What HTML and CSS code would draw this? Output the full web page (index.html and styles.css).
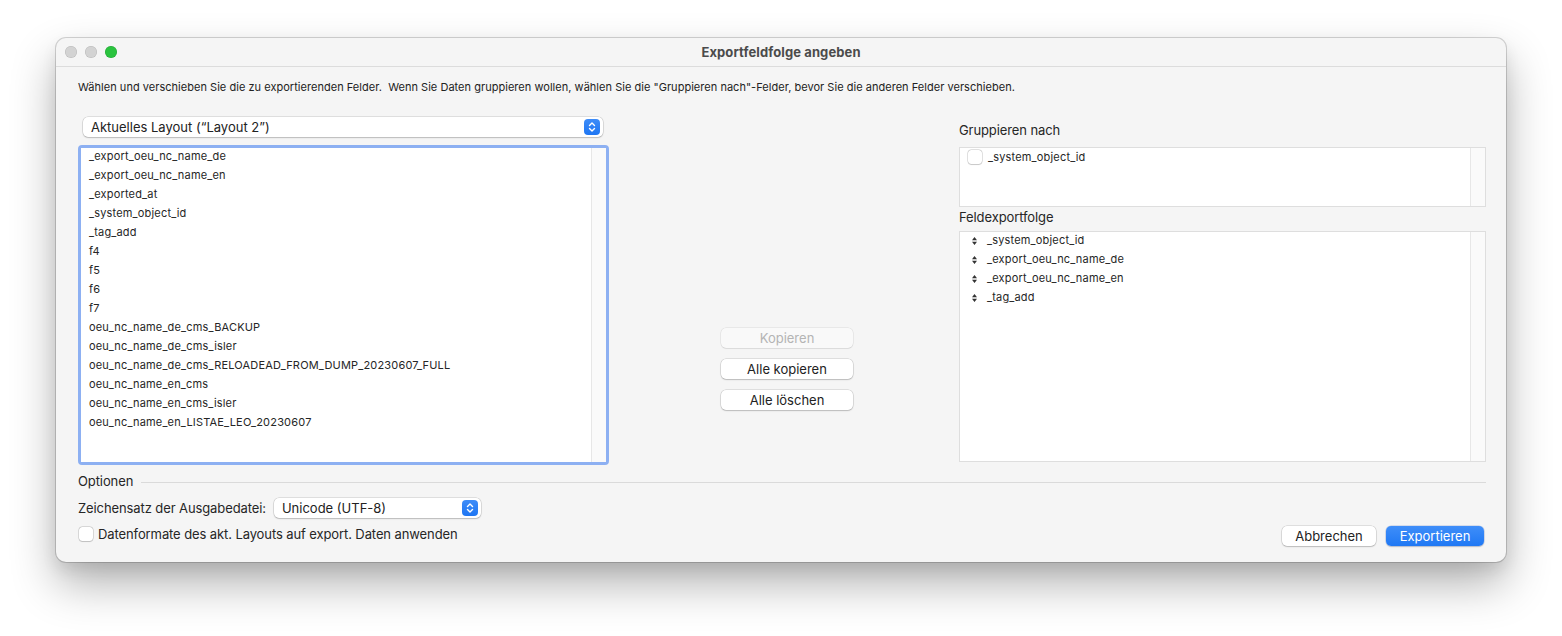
FILE: index.html
```html
<!DOCTYPE html>
<html lang="de">
<head>
<meta charset="utf-8">
<title>Exportfeldfolge angeben</title>
<link rel="stylesheet" href="styles.css">
</head>
<body>
<div class="window">
  <div class="titlebar">
    <div class="lights">
      <span class="light"></span>
      <span class="light"></span>
      <span class="light green"></span>
    </div>
    <div class="title">Exportfeldfolge angeben</div>
    <div></div>
  </div>
  <div class="content">
    <p class="intro">Wählen und verschieben Sie die zu exportierenden Felder.  Wenn Sie Daten gruppieren wollen, wählen Sie die "Gruppieren nach"-Felder, bevor Sie die anderen Felder verschieben.</p>
    <div class="main">
      <div class="leftcol">
        <div class="popup wide">
          <span class="popup-text">Aktuelles Layout (“Layout 2”)</span>
          <span class="stepper"><svg width="16" height="16" viewBox="0 0 16 16"><path d="M5.5 6.5 L8 4 L10.5 6.5 M5.5 9.5 L8 12 L10.5 9.5" fill="none" stroke="#fff" stroke-width="1.4" stroke-linecap="round" stroke-linejoin="round"/></svg></span>
        </div>
        <div class="listring">
          <div class="listbox">
            <ul class="rows">
              <li>_export_oeu_nc_name_de</li>
              <li>_export_oeu_nc_name_en</li>
              <li>_exported_at</li>
              <li>_system_object_id</li>
              <li>_tag_add</li>
              <li>f4</li>
              <li>f5</li>
              <li>f6</li>
              <li>f7</li>
              <li>oeu_nc_name_de_cms_BACKUP</li>
              <li>oeu_nc_name_de_cms_isler</li>
              <li>oeu_nc_name_de_cms_RELOADEAD_FROM_DUMP_20230607_FULL</li>
              <li>oeu_nc_name_en_cms</li>
              <li>oeu_nc_name_en_cms_isler</li>
              <li>oeu_nc_name_en_LISTAE_LEO_20230607</li>
            </ul>
            <div class="track"></div>
          </div>
        </div>
      </div>
      <div class="midcol">
        <button class="btn disabled">Kopieren</button>
        <button class="btn">Alle kopieren</button>
        <button class="btn">Alle löschen</button>
      </div>
      <div class="rightcol">
        <div class="label">Gruppieren nach</div>
        <div class="box groupbox">
          <ul class="rows right">
            <li><span class="check"></span>_system_object_id</li>
          </ul>
          <div class="track"></div>
        </div>
        <div class="label second">Feldexportfolge</div>
        <div class="box orderbox">
          <ul class="rows right">
            <li><svg class="updown" width="5" height="8" viewBox="0 0 5 8"><path d="M0 3.3 L2.5 0 L5 3.3 Z M0 4.7 L2.5 8 L5 4.7 Z" fill="#333"/></svg>_system_object_id</li>
            <li><svg class="updown" width="5" height="8" viewBox="0 0 5 8"><path d="M0 3.3 L2.5 0 L5 3.3 Z M0 4.7 L2.5 8 L5 4.7 Z" fill="#333"/></svg>_export_oeu_nc_name_de</li>
            <li><svg class="updown" width="5" height="8" viewBox="0 0 5 8"><path d="M0 3.3 L2.5 0 L5 3.3 Z M0 4.7 L2.5 8 L5 4.7 Z" fill="#333"/></svg>_export_oeu_nc_name_en</li>
            <li><svg class="updown" width="5" height="8" viewBox="0 0 5 8"><path d="M0 3.3 L2.5 0 L5 3.3 Z M0 4.7 L2.5 8 L5 4.7 Z" fill="#333"/></svg>_tag_add</li>
          </ul>
          <div class="track"></div>
        </div>
      </div>
    </div>
    <div class="optheader">
      <span class="optlabel">Optionen</span>
      <span class="optline"></span>
    </div>
    <div class="bottom">
      <div class="options">
        <div class="optrow">
          <span class="optlabel">Zeichensatz der Ausgabedatei:</span>
          <div class="popup charset">
            <span class="popup-text">Unicode (UTF-8)</span>
            <span class="stepper"><svg width="16" height="16" viewBox="0 0 16 16"><path d="M5.5 6.5 L8 4 L10.5 6.5 M5.5 9.5 L8 12 L10.5 9.5" fill="none" stroke="#fff" stroke-width="1.4" stroke-linecap="round" stroke-linejoin="round"/></svg></span>
          </div>
        </div>
        <label class="checkrow"><span class="check big"></span>Datenformate des akt. Layouts auf export. Daten anwenden</label>
      </div>
      <div class="actions">
        <button class="btn action">Abbrechen</button>
        <button class="btn action primary">Exportieren</button>
      </div>
    </div>
  </div>
</div>
</body>
</html>
```
FILE: styles.css
```css
* { box-sizing: border-box; }
html, body { margin: 0; background: #ffffff; }
body {
  font-family: Inter, "Noto Sans", "Liberation Sans", sans-serif;
  color: #262626;
  padding: 38px 0 0 56px;
  height: 636px;
  overflow: hidden;
}
.window {
  width: 1450px;
  height: 524px;
  background: #f5f5f5;
  border-radius: 10px;
  box-shadow: 0 0 0 1px rgba(0,0,0,0.16), 0 22px 45px rgba(0,0,0,0.30), 0 8px 16px rgba(0,0,0,0.08);
  display: flex;
  flex-direction: column;
  overflow: hidden;
}
.titlebar {
  height: 29px;
  flex: none;
  border-bottom: 1px solid #dcdcdc;
  display: grid;
  grid-template-columns: 1fr auto 1fr;
  align-items: center;
  padding: 0 9px;
}
.lights { display: flex; gap: 8px; }
.light {
  width: 12px; height: 12px; border-radius: 50%;
  background: #d3d3d3;
  box-shadow: inset 0 0 0 0.5px rgba(0,0,0,0.14);
}
.light.green { background: #2ac33f; box-shadow: inset 0 0 0 0.5px rgba(0,110,20,0.35); }
.title { font-size: 13px; font-weight: 700; color: #4b4b4b; letter-spacing: 0.1px; }

.content { flex: 1; padding: 13px 20px 15px 22px; display: flex; flex-direction: column; }
.intro { margin: 0; font-size: 11px; line-height: 14px; white-space: pre; color: #222; letter-spacing: 0.03px; }

.main { display: grid; grid-template-columns: 531px 350px 527px; margin-top: 23px; height: 348px; }

.popup {
  height: 20px;
  background: #fff;
  border-radius: 5px;
  box-shadow: 0 0 0 0.5px rgba(0,0,0,0.18), 0 1px 1.5px rgba(0,0,0,0.16);
  display: flex;
  align-items: center;
  justify-content: space-between;
  padding: 0 3px 0 8px;
  font-size: 13px;
  color: #222;
}
.popup.wide { margin: 0 6px 0 5px; }
.stepper {
  width: 16px; height: 16px; border-radius: 4px;
  background: linear-gradient(#3d8cf8, #1e76f3);
  display: flex;
}
.listring {
  margin-top: 8px;
  height: 320px;
  border: 3px solid #8db0f2;
  border-radius: 4px;
  background: #fff;
}
.listbox { height: 100%; display: flex; background: #fff; }
.rows { list-style: none; margin: 0; padding: 0; flex: 1; font-size: 11px; color: #262626; letter-spacing: 0.18px; }
.rows li { height: 19px; line-height: 19px; padding-left: 8px; white-space: nowrap; }
.leftcol .rows { margin-top: -1px; }
.track { width: 15px; flex: none; background: #fafafa; border-left: 1px solid #e7e7e7; }

.midcol { padding: 211px 0 0 112px; display: flex; flex-direction: column; gap: 11px; }
.btn {
  font-family: inherit;
  width: 132px; height: 20px;
  border: none;
  background: #fff;
  border-radius: 5px;
  box-shadow: 0 0 0 0.5px rgba(0,0,0,0.18), 0 1px 1.5px rgba(0,0,0,0.16);
  font-size: 13px;
  color: #222;
  padding: 0;
}
.btn.disabled { color: #b4b4b4; background: #f9f9f9; box-shadow: 0 0 0 0.5px rgba(0,0,0,0.10), 0 1px 1px rgba(0,0,0,0.06); }

.rightcol { display: flex; flex-direction: column; padding-top: 5px; }
.label { font-size: 13px; line-height: 16px; color: #262626; letter-spacing: -0.1px; }
.label.second { margin-top: 2px; }
.box { display: flex; background: #fff; border: 1px solid #dedede; }
.groupbox { margin-top: 9px; height: 60px; }
.orderbox { margin-top: 6px; height: 231px; }
.rows.right li { display: flex; align-items: center; padding-left: 8px; }
.groupbox .rows li { height: 18px; margin-top: 0; }
.check {
  width: 14px; height: 14px; flex: none;
  border-radius: 3.5px;
  background: #fff;
  box-shadow: 0 0 0 0.5px rgba(0,0,0,0.22), 0 0.5px 1px rgba(0,0,0,0.12);
  margin-right: 6px;
}
.updown { margin: 0 10px 0 4px; flex: none; }
.orderbox .rows { margin-top: -1px; }

.optheader { display: flex; align-items: center; margin-top: 8px; height: 16px; }
.optlabel { font-size: 13px; line-height: 16px; color: #262626; white-space: nowrap; letter-spacing: -0.1px; }
.optline { flex: 1; height: 1px; background: #dadada; margin: 3px 0 0 8px; }

.bottom { display: flex; justify-content: space-between; margin-top: 9px; height: 49px; }
.options { display: flex; flex-direction: column; gap: 8px; }
.optrow { display: flex; align-items: center; gap: 8px; height: 20px; }
.popup.charset { width: 207px; }
.checkrow { display: flex; align-items: center; font-size: 13px; height: 16px; padding-left: 1px; letter-spacing: -0.1px; }
.check.big { margin-right: 5px; }
.actions { display: flex; align-items: flex-end; gap: 10px; margin-right: 2px; }
.btn.action { height: 20px; margin-bottom: 1px; }
.btn.action:first-child { width: 94px; }
.btn.primary {
  width: 98px;
  background: linear-gradient(#3f8ef9, #1f78f4);
  color: #fff;
  box-shadow: 0 0 0 0.5px rgba(0,60,180,0.25), 0 1px 1.5px rgba(0,0,0,0.16);
}
```
